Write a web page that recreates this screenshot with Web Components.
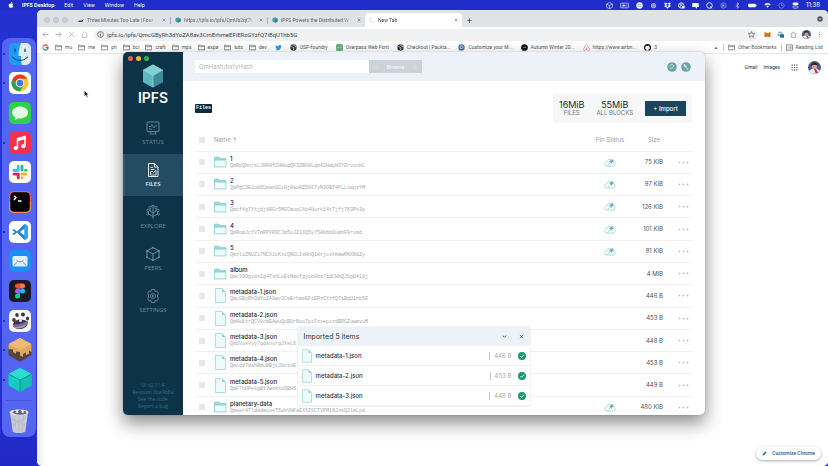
<!DOCTYPE html>
<html lang="en">
<head>
<meta charset="utf-8">
<meta name="viewport" content="width=device-width, initial-scale=1">
<title>IPFS Desktop</title>
<style>
  html, body { margin: 0; height: 100%; }
  body { overflow: hidden; font-family: Inter, "Liberation Sans", sans-serif; }
</style>
</head>
<body>
<mac-desktop>
  <mac-menubar slot="menubar"></mac-menubar>
  <mac-dock slot="dock"></mac-dock>
  <chrome-window slot="browser"></chrome-window>
  <ipfs-window slot="front"></ipfs-window>
</mac-desktop>

<script>
const FOLDER = '<path d="M1 3h8l2 2h12v14H1z" fill="none" stroke="#5f6368" stroke-width="2.4"/><path d="M1 8h22" stroke="#5f6368" stroke-width="2"/>';
const GLOBE = '<circle cx="12" cy="12" r="11" fill="#33373b"/><path d="M4 9c5-1 5 3 8 4s1 5-1 8M13 2c-1 4 2 5 5 5s1 5 4 6" fill="none" stroke="#fff" stroke-width="2.6"/>';
const AVATAR = '<circle cx="12" cy="12" r="12" fill="#4b5d85"/><path d="M2 18a12 12 0 0 0 20 0l-6-4H8z" fill="#eceef4"/><path d="M11 15l3-1 5 8h-5z" fill="#c6333f"/><circle cx="12" cy="9.500" r="4.800" fill="#d9a08a"/><path d="M6 9c-1-8 12-9 12 0-3-3-8-3-12 0z" fill="#2a2228"/>';

// name -> [viewBox, markup]
const ICONS = {
  // menu bar
  apple: ['0 0 24 24', '<path d="M16 6c-2 0-3 1-4 1S10 6 8 6c-8 1-5 17 0 17 2 0 2-1 4-1s2 1 4 1c3 0 5-5 5-6-4-2-4-7 0-9-1-1-3-2-5-2zM12 5c0-3 2-5 5-5 0 3-2 5-5 5z" fill="#fff"/>'],
  mCube: ['0 0 24 24', '<path d="M12 1l10 6v11l-10 5-10-5V7zM2 7l10 5 10-5M12 12v11" fill="none" stroke="#fff" stroke-width="2"/>'],
  mCam: ['0 0 30 24', '<rect x="1" y="4" width="28" height="16" rx="2" fill="none" stroke="#fff" stroke-width="2"/><path d="M7 8v8M11 9l7 3-7 3zM23 8v8" stroke="#fff" stroke-width="2" fill="#fff"/>'],
  mRound: ['0 0 24 24', '<circle cx="12" cy="12" r="11" fill="#fff"/><path d="M5 9h14M5 15h14" stroke="#5965de" stroke-width="2"/>'],
  mGear: ['0 0 24 24', '<circle cx="12" cy="12" r="9" fill="#aab0f2"/><circle cx="12" cy="12" r="5" fill="none" stroke="#4652da" stroke-width="2"/>'],
  mDrop: ['0 0 24 24', '<path d="M6 2l6 4-6 4-6-4zM18 2l6 4-6 4-6-4zM6 10l6 4-6 4-6-4zM18 10l6 4-6 4-6-4zM12 16l5 3-5 3-5-3z" fill="#fff"/>'],
  mClip: ['0 0 24 24', '<circle cx="11" cy="12" r="9" fill="none" stroke="#fff" stroke-width="3"/><path d="M8 17V7h6v5H9" fill="none" stroke="#fff" stroke-width="2"/><path d="M14 14h9v8h-9z" fill="#fff"/>'],
  mChat: ['0 0 24 24', '<path d="M1 3h22v14h-6v6l-6-6H1z" fill="#fff"/>'],
  mQ: ['0 0 24 24', '<circle cx="12" cy="12" r="9.500" fill="none" stroke="#fff" stroke-width="3"/><path d="M14 15l7 7" stroke="#fff" stroke-width="3"/>'],
  mPlay: ['0 0 24 24', '<circle cx="12" cy="12" r="9" fill="none" stroke="#c6caf7" stroke-width="2"/><path d="M9 8l7 4-7 4z" fill="#fff"/>'],
  mBt: ['0 0 24 24', '<path d="M6 7l11 10-5 5V2l5 5L6 17" fill="none" stroke="#c6caf7" stroke-width="2"/>'],
  mBat: ['0 0 34 24', '<rect x="1" y="5" width="28" height="14" rx="3" fill="#fff"/><path d="M31 9v6" stroke="#fff" stroke-width="3"/>'],
  mWifi: ['0 0 24 24', '<path d="M1 8c6-6 16-6 22 0l-4 4c-4-4-10-4-14 0zM7 14c3-3 7-3 10 0l-5 6z" fill="#dfe1fb"/>'],
  mClock: ['0 0 24 24', '<circle cx="12" cy="12" r="9" fill="none" stroke="#9aa1f0" stroke-width="2"/><path d="M12 6v6h5" fill="none" stroke="#9aa1f0" stroke-width="2"/>'],
  mCtl: ['0 0 24 24', '<rect x="2" y="2" width="20" height="9" rx="4.500" fill="#fff"/><rect x="3" y="14" width="18" height="7" rx="3.500" fill="none" stroke="#fff" stroke-width="2"/>'],
  // dock
  finder: ['0 0 44 44', '<rect width="44" height="44" rx="10" fill="#1e9bf5"/><path d="M24 0h10a10 10 0 0 1 10 10v24a10 10 0 0 1-10 10h-8c-2-6-2-12-2-18h-5c0-10 2-18 5-26z" fill="#dfeaf5"/><path d="M12 12v5M32 12v5" stroke="#14334f" stroke-width="2.400" stroke-linecap="round"/><path d="M7 28c8 9 22 9 30 0" fill="none" stroke="#14334f" stroke-width="2.200" stroke-linecap="round"/>'],
  chrome: ['0 0 44 44', '<rect width="44" height="44" rx="10" fill="#fff"/><circle cx="22" cy="22" r="17" fill="#f9c62b"/><path d="M7.300 13.500A17 17 0 0 1 36.700 13.500H22a8.500 8.500 0 0 0-7.400 12.700z" fill="#e33b2e"/><path d="M7.300 13.500l7.300 12.700a8.500 8.500 0 0 0 14.800 0L22 39A17 17 0 0 1 7.300 13.500z" fill="#2aa14c"/><circle cx="22" cy="22" r="8.500" fill="#fff"/><circle cx="22" cy="22" r="6.700" fill="#3a7ded"/>'],
  messages: ['0 0 44 44', '<rect width="44" height="44" rx="10" fill="#2fd04a"/><path d="M22 9c9 0 16 5 16 12s-7 12-16 12l-4-.500c-2 3-5 3-8 3 2-1 3-3 3-5-4-2-7-5-7-9.500C6 14 13 9 22 9z" fill="#e6fbe4"/>'],
  music: ['0 0 44 44', '<rect width="44" height="44" rx="10" fill="#f8304a"/><path d="M17 32V13l15-4v19" fill="none" stroke="#fff" stroke-width="3"/><path d="M16 14l17-5v5l-17 5z" fill="#fff"/><ellipse cx="13.500" cy="32" rx="4.500" ry="4" fill="#fff"/><ellipse cx="28.500" cy="28.500" rx="4.500" ry="4" fill="#fff"/>'],
  slack: ['0 0 44 44', '<rect width="44" height="44" rx="10" fill="#fff"/><g fill="none" stroke-width="5.500" stroke-linecap="round"><path d="M18.500 10v8M10 18.500h3" stroke="#36c5f0"/><path d="M26 10v8" stroke="#2eb67d"/><path d="M34 18.500h-1" stroke="#2eb67d"/><path d="M26 26h8M26 33v1" stroke="#ecb22e"/><path d="M18.500 26v8M10 26h8" stroke="#e01e5a"/><path d="M10 18.500h8" stroke="#36c5f0"/></g>'],
  terminal: ['0 0 44 44', '<rect width="44" height="44" rx="10" fill="#f0576b"/><path d="M0 22h44v12a10 10 0 0 1-10 10H10A10 10 0 0 1 0 34z" fill="#f08a4b"/><rect x="2.500" y="2.500" width="39" height="39" rx="8" fill="#050505"/><path d="M10 10l4 3-4 5M18 20h7" fill="none" stroke="#fff" stroke-width="2.600"/>'],
  vscode: ['0 0 44 44', '<rect width="44" height="44" rx="10" fill="#fff"/><path d="M31 6l7 4v24l-7 4-15-15-6 5-4-2 6-4-6-4 4-2 6 5zM31 15l-9 7 9 7z" fill="#1f86d2" fill-rule="evenodd"/><path d="M31 6l7 4v24l-7 4z" fill="#2fa5ee"/>'],
  mail: ['0 0 44 44', '<rect width="44" height="44" rx="10" fill="#1d8ff2"/><rect x="7" y="12" width="30" height="21" rx="3" fill="#dfeefb"/><path d="M14 19c4 6 12 6 16 0M9 31l8-7M35 31l-8-7" fill="none" stroke="#6e8aa5" stroke-width="1.800"/>'],
  figma: ['0 0 44 44', '<rect width="44" height="44" rx="10" fill="#1d1b22"/><path d="M22 7h-5a5 5 0 0 0 0 10h5z" fill="#f24e1e"/><path d="M22 7h5a5 5 0 0 1 0 10h-5z" fill="#ff7262"/><path d="M22 17h-5a5 5 0 0 0 0 10h5z" fill="#a259ff"/><circle cx="27" cy="22" r="5" fill="#1abcfe"/><path d="M22 27h-5a5 5 0 1 0 5 5z" fill="#0acf83"/>'],
  paw: ['0 0 44 44', '<rect width="44" height="44" rx="10" fill="#f7f6f8"/><g fill="#3a3540"><ellipse cx="10" cy="20" rx="3.500" ry="4"/><ellipse cx="16" cy="10" rx="3.500" ry="4"/><ellipse cx="28" cy="9" rx="4" ry="4"/><ellipse cx="37" cy="17" rx="3" ry="4"/><path d="M8 29c3-12 20-12 29-6 3 9-8 16-18 15-7-1-11-4-11-9z"/></g><path d="M7 29c10 1 21-2 31-8l-1 7c-9 6-19 8-28 6z" fill="#8e5fb0"/><path d="M10 34c9 1 18-2 26-6-3 8-20 12-26 6z" fill="#86b8a4"/><circle cx="23" cy="21" r="3" fill="#dfe3ea"/>'],
  cake: ['0 0 48 48', '<path d="M24 0l23 12v22L24 48 1 34V12z" fill="#59413d"/><path d="M24 0l23 12v16l-5-3v7l-6 2v-5l-6 3v6l-6-3v-7l-8-1v5l-6-4v-5L1 22V12z" fill="#e0a85d"/><path d="M24 0l23 12-23 12L1 12z" fill="#eebb76"/>'],
  cube: ['0 0 48 48', '<path d="M24 0l23 12v23L24 48 1 35V12z" fill="#13cdc2"/><path d="M24 24l23-12v23L24 48z" fill="#12beb6"/><path d="M24 0l23 12-23 12L1 12z" fill="#2adfd2"/><path d="M1 12l23 12 23-12M24 24v24" fill="none" stroke="#0d8e90" stroke-width="1.800"/>'],
  trash: ['0 0 44 50', '<path d="M3 6h38l-6 42c-6 3-20 3-26 0z" fill="#c9cbd4"/><path d="M12 10l4 37M22 10v38M32 10l-4 37M6 20l30 14M8 34l28-16" stroke="#b4b6c3" stroke-width="1.500"/><ellipse cx="22" cy="7" rx="20" ry="6" fill="#e9eaf0"/><path d="M8 8l5-5 5 3 6-5 5 5 6-2 3 5c-6 4-22 4-30-1z" fill="#5b5e6c"/><path d="M14 8l4-4 4 4zM26 8l4-4 3 4z" fill="#fff"/>'],
  // browser
  back: ['0 0 24 24', '<path d="M22 12H3M11 4l-8 8 8 8" fill="none" stroke="#8a8d91" stroke-width="2.200"/>'],
  forward: ['0 0 24 24', '<path d="M2 12h19M13 4l8 8-8 8" fill="none" stroke="#8a8d91" stroke-width="2.200"/>'],
  stop: ['0 0 24 24', '<path d="M4 4l16 16M20 4L4 20" fill="none" stroke="#a0a3a7" stroke-width="2.200"/>'],
  close: ['0 0 24 24', '<path d="M4 4l16 16M20 4L4 20" fill="none" stroke="currentColor" stroke-width="3"/>'],
  plus: ['0 0 24 24', '<path d="M12 1v22M1 12h22" stroke="#3c4043" stroke-width="3.400"/>'],
  home: ['0 0 24 24', '<path d="M4 22V10l8-8 8 8v12z" fill="none" stroke="#a0a3a7" stroke-width="2.200"/>'],
  info: ['0 0 24 24', '<circle cx="12" cy="12" r="10" fill="none" stroke="#4a4d51" stroke-width="2.400"/><path d="M12 10v8M12 5v3" stroke="#4a4d51" stroke-width="2.600"/>'],
  star: ['0 0 24 24', '<path d="M12 2l3 7 8 .700-6 5 2 7.300-7-4-7 4 2-7.300-6-5 8-.700z" fill="none" stroke="#4a4d51" stroke-width="2.200"/>'],
  fox: ['0 0 24 24', '<path d="M1 2l8 5h6l8-5-1 9 1 6-3 5-5-2H9l-5 2-3-5 1-6z" fill="#e2761b"/><path d="M6 13l4 2-4 1zM18 13l-4 2 4 1z" fill="#33241c"/>'],
  badge: ['0 0 24 24', '<circle cx="11" cy="11" r="9" fill="#9bb8c8"/><path d="M4 8c5 3 9 3 14 0" stroke="#fff" fill="none" stroke-width="2"/><rect x="11" y="11" width="13" height="12" rx="2" fill="#23699c"/>'],
  puzzle: ['0 0 24 24', '<path d="M4 8h5c-2-6 6-6 5 0h6v5c-5-1-5 6 0 5v4H4v-5c4 0 4-5 0-5z" fill="none" stroke="#8a8d91" stroke-width="2.200"/>'],
  avatar: ['0 0 24 24', AVATAR],
  kebab: ['0 0 24 24', '<circle cx="12" cy="4" r="2" fill="#84878b"/><circle cx="12" cy="12" r="2" fill="#84878b"/><circle cx="12" cy="20" r="2" fill="#84878b"/>'],
  profile: ['0 0 24 24', '<circle cx="12" cy="12" r="11" fill="#4b4f54"/><path d="M6 10h12l-6 7z" fill="#dee1e6"/>'],
  nyt: ['0 0 24 24', '<path d="M2 15l14-1 7-6-5 11H1z" fill="#17181a"/>'],
  tealDot: ['0 0 24 24', '<path d="M12 1l10 5v12l-10 5-10-5V6z" fill="#3d9fa4"/><path d="M12 12l10-6v12l-10 5z" fill="#2d8389"/>'],
  spinner: ['0 0 24 24', '<path d="M10 3a9 9 0 1 0 10 13" fill="none" stroke="#b9bdc2" stroke-width="2"/>'],
  google: ['0 0 24 24', '<g fill="none" stroke-width="4.500"><path d="M19 6A9 9 0 0 0 4 9" stroke="#e24235"/><path d="M4 8a9 9 0 0 0 0 8" stroke="#f4b71b"/><path d="M4 15a9 9 0 0 0 14 4" stroke="#34a050"/><path d="M12 12h9c0 3-1 5-3 7" stroke="#4079e0"/></g>'],
  folder: ['0 0 24 22', FOLDER],
  twitter: ['0 0 24 24', '<path d="M1 20c9 5 20 0 20-12l2-3-3 .500C18 2 12 2 12 8 8 8 5 6 2 3c-1 3 0 5 2 7H2c0 3 2 4 4 5l-2 .500c1 2 2 2 4 2.500-2 2-4 2-7 2z" fill="#1d9bf0"/>'],
  globe: ['0 0 24 24', GLOBE],
  greenDoc: ['0 0 24 24', '<rect x="1" y="1" width="22" height="22" rx="2" fill="#3f9f63"/><path d="M4 7h16M4 12h16M4 17h16" stroke="#c9ecd5" stroke-width="2"/>'],
  blueDot: ['0 0 24 24', '<circle cx="12" cy="12" r="11" fill="#4c6fa8"/><circle cx="12" cy="11" r="5" fill="none" stroke="#dfe8f6" stroke-width="2.500"/>'],
  blackDot: ['0 0 24 24', '<circle cx="12" cy="12" r="11.500" fill="#141414"/><path d="M7 12h10" stroke="#8a8a8a" stroke-width="3"/>'],
  airbnb: ['0 0 24 24', '<path d="M12 2C9 2 2 17 2 19c0 5 7 4 10-1 3 5 10 6 10 1 0-2-7-17-10-17zm0 16c-6-7 6-7 0 0z" fill="none" stroke="#e8606b" stroke-width="2"/>'],
  github: ['0 0 24 24', '<circle cx="12" cy="12" r="12" fill="#15181c"/><path d="M8 23v-5c-6-2-3-8-2-9V5l4 2h4l4-2v4c1 1 4 7-2 9v5z" fill="#fff"/>'],
  caret: ['0 0 24 24', '<path d="M4 15l8-7 8 7z" fill="#5f6368"/>'],
  reading: ['0 0 24 22', '<rect x="2" y="2" width="20" height="18" fill="none" stroke="#5f6368" stroke-width="2.200"/><path d="M6 7h3M6 11h3M6 15h3M12 7h7M12 11h7M12 15h7" stroke="#5f6368" stroke-width="2"/>'],
  apps: ['0 0 24 24', '<path d="M2 4h4M10 4h4M18 4h4M2 12h4M10 12h4M18 12h4M2 20h4M10 20h4M18 20h4" stroke="#4a4d51" stroke-width="4"/>'],
  pencil: ['0 0 24 24', '<path d="M2 22l2-7L17 2l5 5L9 20z" fill="#2c5a94"/>'],
  // ipfs
  logo: ['0 0 42 48', '<path d="M21 1l20 11v24L21 47 1 36V12z" fill="#4ba3ab"/><path d="M21 1l20 11-20 11L1 12z" fill="#7ed0d4"/><path d="M21 23l20-11v24L21 47z" fill="#3c8d97"/><path d="M21 23L1 12v24l20 11z" fill="#5cb9bf"/><path d="M2 12l19 11 19-11M21 23v23" fill="none" stroke="#a0e0e2" stroke-width="1.400"/>'],
  status: ['0 0 32 32', '<rect x="4" y="4" width="24" height="19" rx="1" fill="none" stroke="currentColor" stroke-width="1.800"/><path d="M8 13h4l2-4 4 7 2-4 4-1M9 28h14M12 23l-1 5M20 23l1 5M8 18h6" fill="none" stroke="currentColor" stroke-width="1.600"/>'],
  files: ['0 0 32 32', '<path d="M7 3h12l7 7v19H7zM19 3v7h7" fill="none" stroke="currentColor" stroke-width="2"/><path d="M11 11h5M11 15h8M11 26v-6l3-2 3 3 5-4v9z" fill="none" stroke="currentColor" stroke-width="1.800"/>'],
  explore: ['0 0 32 32', '<path d="M16 30V4M16 25l-9-5v-5M16 25l9-5v-5M16 18l-6-4V9M16 18l6-4V9M12 5l4-3 4 3" fill="none" stroke="currentColor" stroke-width="1.800"/><g fill="none" stroke="currentColor" stroke-width="1.400"><circle cx="6" cy="13" r="2.500"/><circle cx="26" cy="13" r="2.500"/><circle cx="10" cy="7" r="2.500"/><circle cx="22" cy="7" r="2.500"/><circle cx="5" cy="20" r="2"/><circle cx="27" cy="20" r="2"/></g>'],
  peers: ['0 0 32 32', '<path d="M16 3l12 6.500v13L16 29 4 22.500v-13zM4 9.500L16 16l12-6.500M16 16v13" fill="none" stroke="currentColor" stroke-width="2"/><g fill="currentColor"><circle cx="16" cy="3.500" r="1.800"/><circle cx="28" cy="9.500" r="1.800"/><circle cx="28" cy="22.500" r="1.800"/><circle cx="16" cy="28.500" r="1.800"/><circle cx="4" cy="22.500" r="1.800"/><circle cx="4" cy="9.500" r="1.800"/></g>'],
  settings: ['0 0 32 32', '<path d="M13 3h6l1 4 4-1 3 5-2 3v4l2 3-3 5-4-1-1 4h-6l-1-4-4 1-3-5 2-3v-4l-2-3 3-5 4 1z" fill="none" stroke="currentColor" stroke-width="1.800"/><circle cx="16" cy="16" r="5" fill="none" stroke="currentColor" stroke-width="1.600"/><circle cx="16" cy="16" r="2" fill="currentColor"/>'],
  dir: ['0 0 26 24', '<path d="M1 22V2h9l2 3h12v17z" fill="#9edada"/><path d="M2 8.500h22v13H2z" fill="#f0fbfb"/><path d="M1 22V2h9l2 3h12v17zM1 8h23" fill="none" stroke="#74c8cb" stroke-width="1.200"/>'],
  doc: ['0 0 22 30', '<path d="M1 1h13l7 7v21H1z" fill="#edfafa" stroke="#8fd0d3" stroke-width="1.400"/><path d="M14 1l7 7h-7z" fill="#8fd3d3"/>'],
  pin: ['0 0 24 18', '<path d="M6 16c-6 0-6-7-1-8 1-6 9-7 12-2 6 0 7 9 2 10z" fill="none" stroke="#8fd3d3" stroke-width="1.600"/><path d="M7 15l5-5M11 7l4 4 1-2 3-3-2-3-4 2z" fill="#5fb5b8" stroke="#5fb5b8" stroke-width="1"/>'],
  help: ['0 0 24 24', '<circle cx="12" cy="12" r="11.500" fill="#69a5a8"/><path d="M7 9c1-4 10-4 9 1l-4 4v2M7 13l3 4" fill="none" stroke="#e3f1f2" stroke-width="2"/>'],
  tour: ['0 0 24 24', '<circle cx="12" cy="12" r="11.500" fill="#69a5a8"/><path d="M8 5l4 4v4l5 6M8 5v6l3 1" fill="none" stroke="#e3f1f2" stroke-width="2.400"/>'],
  magnify: ['0 0 24 24', '<circle cx="12" cy="12" r="8" fill="none" stroke="#dfe2e8" stroke-width="2"/><circle cx="12" cy="12" r="2" fill="#dfe2e8"/>'],
  dots: ['0 0 30 8', '<circle cx="4" cy="4" r="2.600" fill="#bfc3c8"/><circle cx="15" cy="4" r="2.600" fill="#bfc3c8"/><circle cx="26" cy="4" r="2.600" fill="#bfc3c8"/>'],
  chevron: ['0 0 24 24', '<path d="M4 8l8 8 8-8" fill="none" stroke="#3f4a57" stroke-width="4"/>'],
  check: ['0 0 24 24', '<circle cx="12" cy="12" r="12" fill="#0f9d6e"/><path d="M7 12l4 4 7-8" fill="none" stroke="#fff" stroke-width="3"/>'],
  pointer: ['0 0 14 22', '<path d="M1 1v17l4-4 3 7 3-1-3-7h5z" fill="#111" stroke="#fff" stroke-width="1.200"/>']
};

const RESET = `
  * { box-sizing: border-box; }
  button, input { font: inherit; color: inherit; border: 0; margin: 0; padding: 0; background: none; min-width: 0; }
  a { color: inherit; text-decoration: none; }
  ul { list-style: none; margin: 0; padding: 0; }
`;

class BaseElement extends HTMLElement {
  connectedCallback() {
    if (this.shadowRoot) return;
    this.attachShadow({ mode: 'open' });
    this.shadowRoot.innerHTML = `<style>${RESET}${this.styles()}</style>${this.render()}`;
  }
  styles() { return ''; }
  render() { return '<slot></slot>'; }
}

class UiIcon extends BaseElement {
  styles() {
    return `
      :host { display: block; flex: none; width: 8px; height: 8px; }
      svg { display: block; width: 100%; height: 100%; }
    `;
  }
  render() {
    const [box, body] = ICONS[this.getAttribute('name')];
    return `<svg viewBox="${box}" aria-hidden="true">${body}</svg>`;
  }
}

class MacDesktop extends BaseElement {
  styles() {
    return `
      :host {
        display: flex;
        flex-direction: column;
        position: relative;
        height: 100vh;
        overflow: hidden;
        background: linear-gradient(#2330cf, #2a38dc 60%, #2029c4);
      }
      .space { flex: 1; display: flex; gap: 1px; padding-left: 2px; min-height: 0; }
      ::slotted([slot=browser]) { flex: 1; min-width: 0; }
      ::slotted([slot=front]) { position: absolute; inset: 52px 123px 51px; }
      .pointer { position: absolute; left: 84px; top: 90px; width: 5px; height: 8px; }
    `;
  }
  render() {
    return `
      <slot name="menubar"></slot>
      <div class="space">
        <slot name="dock"></slot>
        <slot name="browser"></slot>
      </div>
      <slot name="front"></slot>
      <ui-icon class="pointer" name="pointer"></ui-icon>
    `;
  }
}

class MacMenubar extends BaseElement {
  styles() {
    return `
      :host {
        display: flex;
        justify-content: space-between;
        height: 10px;
        padding: 0 8px;
        color: #fff;
        font-size: 5px;
        line-height: 10px;
        background: #202dcb;
      }
      nav, .tray { display: flex; align-items: center; gap: 9px; }
      nav { gap: 10px; }
      nav ui-icon { width: 6px; height: 6px; margin-right: -2px; }
      .tray { gap: 7px; }
      .tray ui-icon { width: 7px; height: 7px; }
      .tray ui-icon[name=mCam], .tray ui-icon[name=mBat] { width: 9px; }
      button { line-height: 10px; }
      .app { font-weight: 700; }
      time { font-size: 6px; }
    `;
  }
  render() {
    const tray = ['mCube', 'mCam', 'mRound', 'mGear', 'mDrop', 'mClip', 'mChat', 'mQ', 'mPlay', 'mBt', 'mBat', 'mWifi', 'mClock', 'mCtl'];
    return `
      <nav>
        <ui-icon name="apple"></ui-icon>
        <button class="app">IPFS Desktop</button>
        ${['Edit', 'View', 'Window', 'Help'].map(t => `<button>${t}</button>`).join('')}
      </nav>
      <div class="tray">
        ${tray.map(n => `<ui-icon name="${n}"></ui-icon>`).join('')}
        <time>11:38</time>
      </div>
    `;
  }
}

class MacDock extends BaseElement {
  styles() {
    return `
      :host {
        display: flex;
        flex-direction: column;
        align-items: center;
        width: 34px;
        margin: 28px 0 29px;
        padding: 1px 0 4px;
        border-radius: 8px;
        background: #5365f2;
      }
      ul { flex: 1; display: flex; flex-direction: column; justify-content: space-around; width: 100%; }
      li { display: flex; align-items: center; gap: 4px; padding-left: 1px; }
      li::before { content: ""; width: 2px; height: 2px; border-radius: 50%; }
      li.open::before { background: #1b2380; }
      button { display: block; }
      ui-icon { width: 22px; height: 22px; }
      ui-icon[name=cake], ui-icon[name=cube] { width: 24px; height: 26px; margin: -2px -1px; }
      hr { width: 26px; margin: 5px 0 8px; border: 0; border-top: 1px solid #4353d6; }
      ui-icon[name=trash] { height: 24px; }
    `;
  }
  render() {
    const apps = ['finder*', 'chrome*', 'messages', 'music*', 'slack', 'terminal', 'vscode*', 'mail', 'figma', 'paw*', 'cake*', 'cube*'];
    const items = apps.map(a => {
      const name = a.replace('*', '');
      return `<li class="${a.endsWith('*') ? 'open' : ''}"><button aria-label="${name}"><ui-icon name="${name}"></ui-icon></button></li>`;
    });
    return `<ul>${items.join('')}</ul><hr><button aria-label="trash"><ui-icon name="trash"></ui-icon></button>`;
  }
}

class ChromeTab extends BaseElement {
  styles() {
    return `
      :host {
        display: flex;
        align-items: center;
        gap: 3px;
        width: 97px;
        height: 14px;
        padding: 0 4px 0 4px;
        color: #5f6368;
      }
      :host([active]) { background: #fff; border-radius: 4px 4px 0 0; color: #3c4043; }
      :host([divided]) { border-right: 1px solid #a9adb3; height: 7px; }
      .title {
        flex: 1;
        min-width: 0;
        overflow: hidden;
        text-align: left;
        white-space: nowrap;
        -webkit-mask-image: linear-gradient(90deg, #000 85%, transparent);
      }
      ui-icon { width: 6px; height: 6px; }
      .close ui-icon { width: 4px; height: 4px; color: #45494d; }
    `;
  }
  render() {
    return `
      <ui-icon name="${this.getAttribute('icon')}"></ui-icon>
      <button class="title"><slot></slot></button>
      <button class="close" aria-label="Close tab"><ui-icon name="close"></ui-icon></button>
    `;
  }
}

class ChromeBookmark extends BaseElement {
  styles() {
    return `
      :host { display: block; flex: none; }
      a { display: flex; align-items: center; gap: 3px; white-space: nowrap; }
      ui-icon { width: 7px; height: 7px; }
    `;
  }
  render() {
    return `<a href="#"><ui-icon name="${this.getAttribute('icon')}"></ui-icon><slot></slot></a>`;
  }
}

class ChromeWindow extends BaseElement {
  styles() {
    return `
      :host {
        display: flex;
        flex-direction: column;
        overflow: hidden;
        border-radius: 5px;
        background: #fff;
        color: #54585c;
        font: 5px/7px Roboto, "Liberation Sans", sans-serif;
      }
      .tabs { display: flex; align-items: center; height: 17px; padding: 3px 5px 0 7px; background: #dfe2e6; }
      .lights { display: flex; gap: 3px; width: 30px; }
      .lights i { width: 6px; height: 6px; border-radius: 50%; background: #cbced2; border: 1px solid #bfc3c7; }
      .new { margin-left: 5px; }
      .new ui-icon { width: 5px; height: 5px; }
      .profile { margin: -3px 0 0 auto; }
      .profile ui-icon { width: 6px; height: 6px; }
      .toolbar { display: flex; align-items: center; gap: 6px; height: 15px; padding: 0 5px; }
      .toolbar ui-icon { width: 7px; height: 7px; }
      .omnibox {
        flex: 1;
        display: flex;
        align-items: center;
        gap: 3px;
        height: 12px;
        padding: 0 3px;
        border-radius: 6px;
        background: #f0f1f3;
        color: #3c4043;
        font-size: 6px;
      }
      .omnibox input { flex: 1; height: 10px; }
      .toolbar ui-icon[name=avatar] { width: 9px; height: 9px; margin: -1px; }
      .bookmarks { display: flex; align-items: center; gap: 6px; height: 12px; padding: 0 5px; border-bottom: 1px solid #e6e8ea; }
      .sites { display: flex; gap: 8px; margin-left: 2px; }
      .rest { display: flex; align-items: center; gap: 4px; margin-left: auto; }
      .rest i { width: 1px; height: 7px; background: #c6c9cd; }
      .rest ui-icon { width: 6px; height: 6px; }
      .page { flex: 1; display: flex; flex-direction: column; justify-content: space-between; align-items: flex-end; padding: 7px 7px 6px; color: #333; background: linear-gradient(90deg, #ececec, #fff 8px); }
      .links { display: flex; align-items: center; gap: 6px; }
      .links ui-icon[name=apps] { width: 7px; height: 7px; margin: 0 4px 0 5px; }
      .links ui-icon[name=avatar] { width: 13px; height: 13px; }
      .customize {
        display: flex;
        align-items: center;
        gap: 5px;
        height: 13px;
        padding: 0 6px;
        border-radius: 7px;
        background: #fff;
        box-shadow: 0 1px 3px #0005;
        color: #2c5a94;
        font-weight: 500;
      }
      .customize ui-icon { width: 5px; height: 5px; }
    `;
  }
  render() {
    const folders = ['mu', 'me', 'ph', 'bci', 'craft', 'mps', 'expa', 'tuts', 'dev'];
    const sites = [
      ['twitter', ''], ['globe', 'OSP-foundry'], ['greenDoc', 'Overpass Web Font'], ['globe', 'Checkout | Packla...'],
      ['blueDot', 'Customize your M...'], ['blackDot', 'Autumn Winter 20...'],
      ['airbnb', 'https://www.airbn...'], ['github', '3']
    ];
    const mark = ([icon, text]) => `<chrome-bookmark icon="${icon}">${text}</chrome-bookmark>`;
    const tool = (icon, label) => `<button aria-label="${label}"><ui-icon name="${icon}"></ui-icon></button>`;
    return `
      <div class="tabs">
        <div class="lights"><i></i><i></i><i></i></div>
        <chrome-tab icon="nyt" divided>Three Minutes Too Late | Four</chrome-tab>
        <chrome-tab icon="tealDot" divided>https://ipfs.io/ipfs/QmUb2qt7t</chrome-tab>
        <chrome-tab icon="tealDot">IPFS Powers the Distributed W</chrome-tab>
        <chrome-tab icon="spinner" active>New Tab</chrome-tab>
        <button class="new" aria-label="New tab"><ui-icon name="plus"></ui-icon></button>
        <button class="profile" aria-label="Tab search"><ui-icon name="profile"></ui-icon></button>
      </div>
      <div class="toolbar">
        ${tool('back', 'Back')}${tool('forward', 'Forward')}${tool('stop', 'Stop')}${tool('home', 'Home')}
        <div class="omnibox">
          <ui-icon name="info"></ui-icon>
          <input aria-label="Address" value="ipfs.io/ipfs/QmcGByRh3dYoZA8av3CmErhmeEFiERzGYzfQ7iBqU1hb5G">
          ${tool('star', 'Bookmark')}
        </div>
        ${tool('fox', 'MetaMask')}${tool('badge', 'IPFS Companion')}${tool('puzzle', 'Extensions')}${tool('avatar', 'Profile')}${tool('kebab', 'Menu')}
      </div>
      <div class="bookmarks">
        ${mark(['google', ''])}
        ${folders.map(f => mark(['folder', f])).join('')}
        <div class="sites">${sites.map(mark).join('')}</div>
        <div class="rest">
          <ui-icon name="caret"></ui-icon><i></i>
          ${mark(['folder', 'Other Bookmarks'])}<i></i>
          ${mark(['reading', 'Reading List'])}
        </div>
      </div>
      <div class="page">
        <div class="links">
          <a href="#">Gmail</a><a href="#">Images</a>
          <ui-icon name="apps"></ui-icon><ui-icon name="avatar"></ui-icon>
        </div>
        <button class="customize"><ui-icon name="pencil"></ui-icon>Customize Chrome</button>
      </div>
    `;
  }
}

class NavLink extends BaseElement {
  styles() {
    return `
      :host { display: block; flex: none; color: #6d8c9d; }
      :host([active]) { color: #e8eff3; background: #234b61; border-left: 2px solid #31586e; padding-right: 2px; font-weight: 600; }
      a { display: flex; flex-direction: column; align-items: center; justify-content: center; gap: 2px; height: 42px; }
      ui-icon { width: 16px; height: 16px; }
    `;
  }
  render() {
    return `<a href="#"><ui-icon name="${this.getAttribute('icon')}"></ui-icon><slot></slot></a>`;
  }
}

class IpfsSidebar extends BaseElement {
  styles() {
    return `
      :host {
        display: flex;
        flex-direction: column;
        width: 60px;
        background: #0d3349;
        font: 6px/8px "Open Sans", Inter, sans-serif;
      }
      .lights { display: flex; gap: 3px; padding: 4px 5px 0; }
      .lights i { width: 5px; height: 5px; border-radius: 50%; }
      .brand { display: flex; flex-direction: column; align-items: center; gap: 2px; padding: 3px 0 6px; color: #fff; font: 600 14px/16px Inter, sans-serif; }
      .brand ui-icon { width: 22px; height: 24px; }
      nav { display: flex; flex-direction: column; }
      footer { display: flex; flex-direction: column; align-items: center; margin-top: auto; padding-bottom: 5px; color: #2d7089; font-size: 5px; line-height: 7px; }
    `;
  }
  render() {
    const links = ['Status', 'Files', 'Explore', 'Peers', 'Settings'];
    return `
      <div class="lights"><i style="background:#f15b50"></i><i style="background:#f3b52e"></i><i style="background:#2bb741"></i></div>
      <div class="brand"><ui-icon name="logo"></ui-icon>IPFS</div>
      <nav>
        ${links.map(l => `<nav-link icon="${l.toLowerCase()}" ${l === 'Files' ? 'active' : ''}>${l.toUpperCase()}</nav-link>`).join('')}
      </nav>
      <footer>
        <span>UI v2.11.4</span>
        <a href="#">Revision 6ba9b8a</a>
        <a href="#">See the code</a>
        <a href="#">Report a bug</a>
      </footer>
    `;
  }
}

class FileTable extends BaseElement {
  styles() {
    return `
      :host { display: block; color: #4c535a; font-size: 6px; }
      table { width: 100%; height: 289px; table-layout: fixed; border-collapse: collapse; }
      th { height: 22px; padding: 0; color: #9ba1a8; font-weight: 400; text-align: left; }
      td { padding: 0; }
      tbody tr { border-top: 1px solid #eff1f3; }
      input { display: block; appearance: none; width: 6px; height: 6px; margin-left: 4px; background: #e6e8ea; }
      ui-icon[name=dir] { width: 13px; height: 12px; }
      ui-icon[name=doc] { width: 11px; height: 15px; margin-left: 1px; }
      ui-icon[name=pin] { width: 12px; height: 9px; margin: 0 auto; }
      ui-icon[name=dots] { width: 11px; height: 3px; }
      .check { width: 19px; }
      .icon { width: 16px; }
      .pin { width: 60px; }
      .size { width: 23px; text-align: right; white-space: nowrap; }
      .more { width: 29px; }
      .more button { display: block; margin-left: 15px; }
      .name { line-height: 8px; font-weight: 500; color: #22272d; }
      .hash { line-height: 7px; color: #a3a8ad; font-family: "Liberation Mono", monospace; font-size: 5px; white-space: nowrap; }
      th.center { text-align: center; }
      th.size { padding-right: 3px; }
    `;
  }
  render() {
    const files = [
      ['dir', '1', 'QmRpQbnrkLJNKHfZHWodQK3ZBG8LqbA2HapH6YZrvonHL', '75 KiB', 1],
      ['dir', '2', 'QmPgC3E1u86UeanUCxHjHaoHZ5G67yN3GBf4FLLxwpzYM', '97 KiB', 1],
      ['dir', '3', 'Qmcf4g7Ytjdj8BGr5MGCmopCAb4Uurk14tTjfj7K3Pn3p', '126 KiB', 1],
      ['dir', '4', 'QmRomJcYVTmRPVR9CJm5uJZ1XQ5y75AbbbDumhF9rxmd', '101 KiB', 1],
      ['dir', '5', 'QmzliZNUZi7NCXJcKxcQNGLIsHnQ18rjcvkKmwRNXN8Zy', '81 KiB', 1],
      ['dir', 'album', 'Qmc399gy8sZg47shLuEtNmcfgyoh8bs7idCHbQJ6gU418j', '4 MiB'],
      ['doc', 'metadata-1.json', 'QmcGByRh3dYoZA8av3CmErhmeEFiERzGYzfQ7iBqU1hb5G', '446 B'],
      ['doc', 'metadata-2.json', 'QmHokxrQCV8cmEAwuQcBUrNoo7piFzxepxzdBRGZuwmvuM', '453 B'],
      ['doc', 'metadata-3.json', 'QmUVoeVyy7qdsnvrgJXeL6', '448 B'],
      ['doc', 'metadata-4.json', 'Qmcd878ahBmuBBjLJ8cssE', '453 B'],
      ['doc', 'metadata-5.json', 'QmF7hDPekgBt3wzkxoDBHS', '449 B'],
      ['dir', 'planetary-data', 'Qmeer4TldmdmoueT5ohVHKaEX6Z6CTVPM1NJxeQ2laLpd', '480 KiB', 1]
    ];
    const rows = files.map(([icon, name, hash, size, pinned]) => `
      <tr>
        <td><input type="checkbox" aria-label="Select ${name}"></td>
        <td><ui-icon name="${icon}"></ui-icon></td>
        <td><div class="name">${name}</div><div class="hash">${hash}</div></td>
        <td>${pinned ? '<ui-icon name="pin"></ui-icon>' : ''}</td>
        <td class="size">${size}</td>
        <td class="more"><button aria-label="Actions for ${name}"><ui-icon name="dots"></ui-icon></button></td>
      </tr>`);
    return `
      <table>
        <colgroup><col class="check"><col class="icon"><col><col class="pin"><col class="size"><col class="more"></colgroup>
        <thead>
          <tr>
            <th><input type="checkbox" aria-label="Select all"></th>
            <th colspan="2">Name ↑</th>
            <th class="center">Pin Status</th>
            <th class="size">Size</th>
            <th></th>
          </tr>
        </thead>
        <tbody>${rows.join('')}</tbody>
      </table>
    `;
  }
}

class ImportPanel extends BaseElement {
  styles() {
    return `
      :host { display: block; background: #fff; box-shadow: 0 0 2px #0002; color: #2c3239; font-size: 6px; line-height: 8px; }
      header { display: flex; align-items: center; gap: 12px; height: 19px; padding: 0 6px; background: #edf2f8; font-size: 7px; }
      header span { flex: 1; }
      header ui-icon { width: 5px; height: 5px; }
      li { display: flex; align-items: center; height: 20px; padding: 0 4px; border-bottom: 1px solid #eff1f3; font-weight: 500; }
      li ui-icon[name=doc] { width: 10px; height: 14px; margin-right: 4px; }
      li ui-icon[name=check] { width: 8px; height: 8px; }
      li span { flex: 1; }
      small { margin-right: 7px; padding-left: 4px; border-left: 1px solid #c3c8ce; color: #a6abb1; font-size: 6px; font-weight: 400; }
    `;
  }
  render() {
    const items = [['metadata-1.json', '446 B'], ['metadata-2.json', '453 B'], ['metadata-3.json', '448 B']];
    return `
      <header>
        <span>Imported 5 items</span>
        <button aria-label="Collapse"><ui-icon name="chevron"></ui-icon></button>
        <button aria-label="Close"><ui-icon name="close"></ui-icon></button>
      </header>
      <ul>
        ${items.map(([n, s]) => `<li><ui-icon name="doc"></ui-icon><span>${n}</span><small>${s}</small><ui-icon name="check"></ui-icon></li>`).join('')}
      </ul>
    `;
  }
}

class IpfsWindow extends BaseElement {
  styles() {
    return `
      :host {
        display: flex;
        overflow: hidden;
        border-radius: 5px;
        background: #fff;
        box-shadow: 0 0 1px #0008, 0 8px 18px #0007;
        font-size: 6px;
        line-height: 8px;
      }
      main { flex: 1; min-width: 0; display: flex; flex-direction: column; }
      .top { display: flex; align-items: center; flex: none; height: 29px; padding: 0 14px 0 12px; background: #edf2f8; }
      .top input { width: 174px; height: 13px; padding: 0 4px; background: #fff; color: #4a5058; }
      .top input::placeholder { color: #b4b9bf; opacity: 1; }
      .browse { display: flex; align-items: center; justify-content: center; gap: 7px; width: 53px; height: 13px; background: #cdd1d8; color: #f2f4f7; font-size: 5px; font-weight: 600; }
      .browse ui-icon { width: 6px; height: 6px; }
      .tools { display: flex; gap: 4px; margin-left: auto; }
      .tools ui-icon { width: 10px; height: 10px; }
      .head { display: flex; align-items: center; justify-content: space-between; margin: 13px 13px 6px 12px; }
      .crumb { padding: 0 1px; border-radius: 1px; background: #0b2a3d; color: #fff; font: 700 5px/9px "Liberation Mono", monospace; }
      .stats { display: flex; align-items: center; height: 29px; padding: 0 6px; background: #f5f7f9; text-align: center; }
      .stats div { color: #6f777f; margin-right: 12px; }
      .stats b { display: block; color: #24292f; font-size: 9px; line-height: 9px; font-weight: 400; }
      .import { height: 15px; width: 41px; background: #1a455c; color: #fff; font-size: 6px; font-weight: 500; }
      file-table { margin: 0 13px 0 12px; }
      /* floats over the file list */
      import-panel { position: absolute; left: 30%; bottom: 9px; width: 40%; }
    `;
  }
  render() {
    return `
      <ipfs-sidebar></ipfs-sidebar>
      <main>
        <div class="top">
          <input aria-label="CID or path" placeholder="QmHash/bafyHash">
          <button class="browse"><ui-icon name="magnify"></ui-icon>Browse<ui-icon name="magnify"></ui-icon></button>
          <div class="tools">
            <button aria-label="Help"><ui-icon name="help"></ui-icon></button>
            <button aria-label="Tour"><ui-icon name="tour"></ui-icon></button>
          </div>
        </div>
        <div class="head">
          <a class="crumb" href="#">Files</a>
          <div class="stats">
            <div><b>16MiB</b>FILES</div>
            <div><b>55MiB</b>ALL BLOCKS</div>
            <button class="import">+ Import</button>
          </div>
        </div>
        <file-table></file-table>
      </main>
      <import-panel></import-panel>
    `;
  }
}

customElements.define('ui-icon', UiIcon);
customElements.define('chrome-tab', ChromeTab);
customElements.define('chrome-bookmark', ChromeBookmark);
customElements.define('nav-link', NavLink);
customElements.define('ipfs-sidebar', IpfsSidebar);
customElements.define('file-table', FileTable);
customElements.define('import-panel', ImportPanel);
customElements.define('ipfs-window', IpfsWindow);
customElements.define('chrome-window', ChromeWindow);
customElements.define('mac-menubar', MacMenubar);
customElements.define('mac-dock', MacDock);
customElements.define('mac-desktop', MacDesktop);
</script>
</body>
</html>
